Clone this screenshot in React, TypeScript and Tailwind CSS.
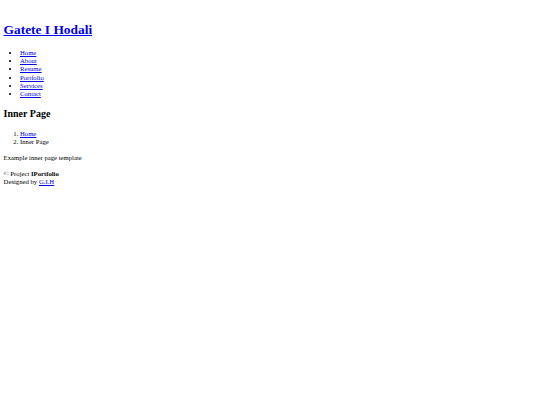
const NAV = ["Home", "About", "Resume", "Portfolio", "Services", "Contact"];

function A({ children }: { children: React.ReactNode }) {
  return (
    <a href="#" className="text-[#0000ee] underline">
      {children}
    </a>
  );
}

export default function App() {
  return (
    <div className="min-h-screen bg-white px-[3.6px] pt-[22px] pb-4 text-[6.7px] leading-[8.3px] text-black font-['Liberation_Serif',serif]">
      {/* Header */}
      <header>
        <h1 className="text-[13.4px] font-bold leading-[16px]">
          <A>Gatete I Hodali</A>
        </h1>
        <nav className="mt-[10.85px]">
          <ul className="list-disc pl-[16.4px]">
            {NAV.map((item) => (
              <li key={item}>
                <A>{item}</A>
              </li>
            ))}
          </ul>
        </nav>
      </header>

      {/* Main */}
      <main>
        <h2 className="mt-[9.15px] text-[10px] font-bold leading-[12.4px]">Inner Page</h2>
        <ol className="mt-[9.65px] list-decimal pl-[16.4px]">
          <li>
            <A>Home</A>
          </li>
          <li>Inner Page</li>
        </ol>
        <p className="mt-[7.4px]">Example inner page template</p>
      </main>

      {/* Footer */}
      <footer className="mt-[7.7px]">
        <div>
          © Project <strong>IPortfolio</strong>
        </div>
        <div>
          Designed by <A>G.I.H</A>
        </div>
      </footer>
    </div>
  );
}
